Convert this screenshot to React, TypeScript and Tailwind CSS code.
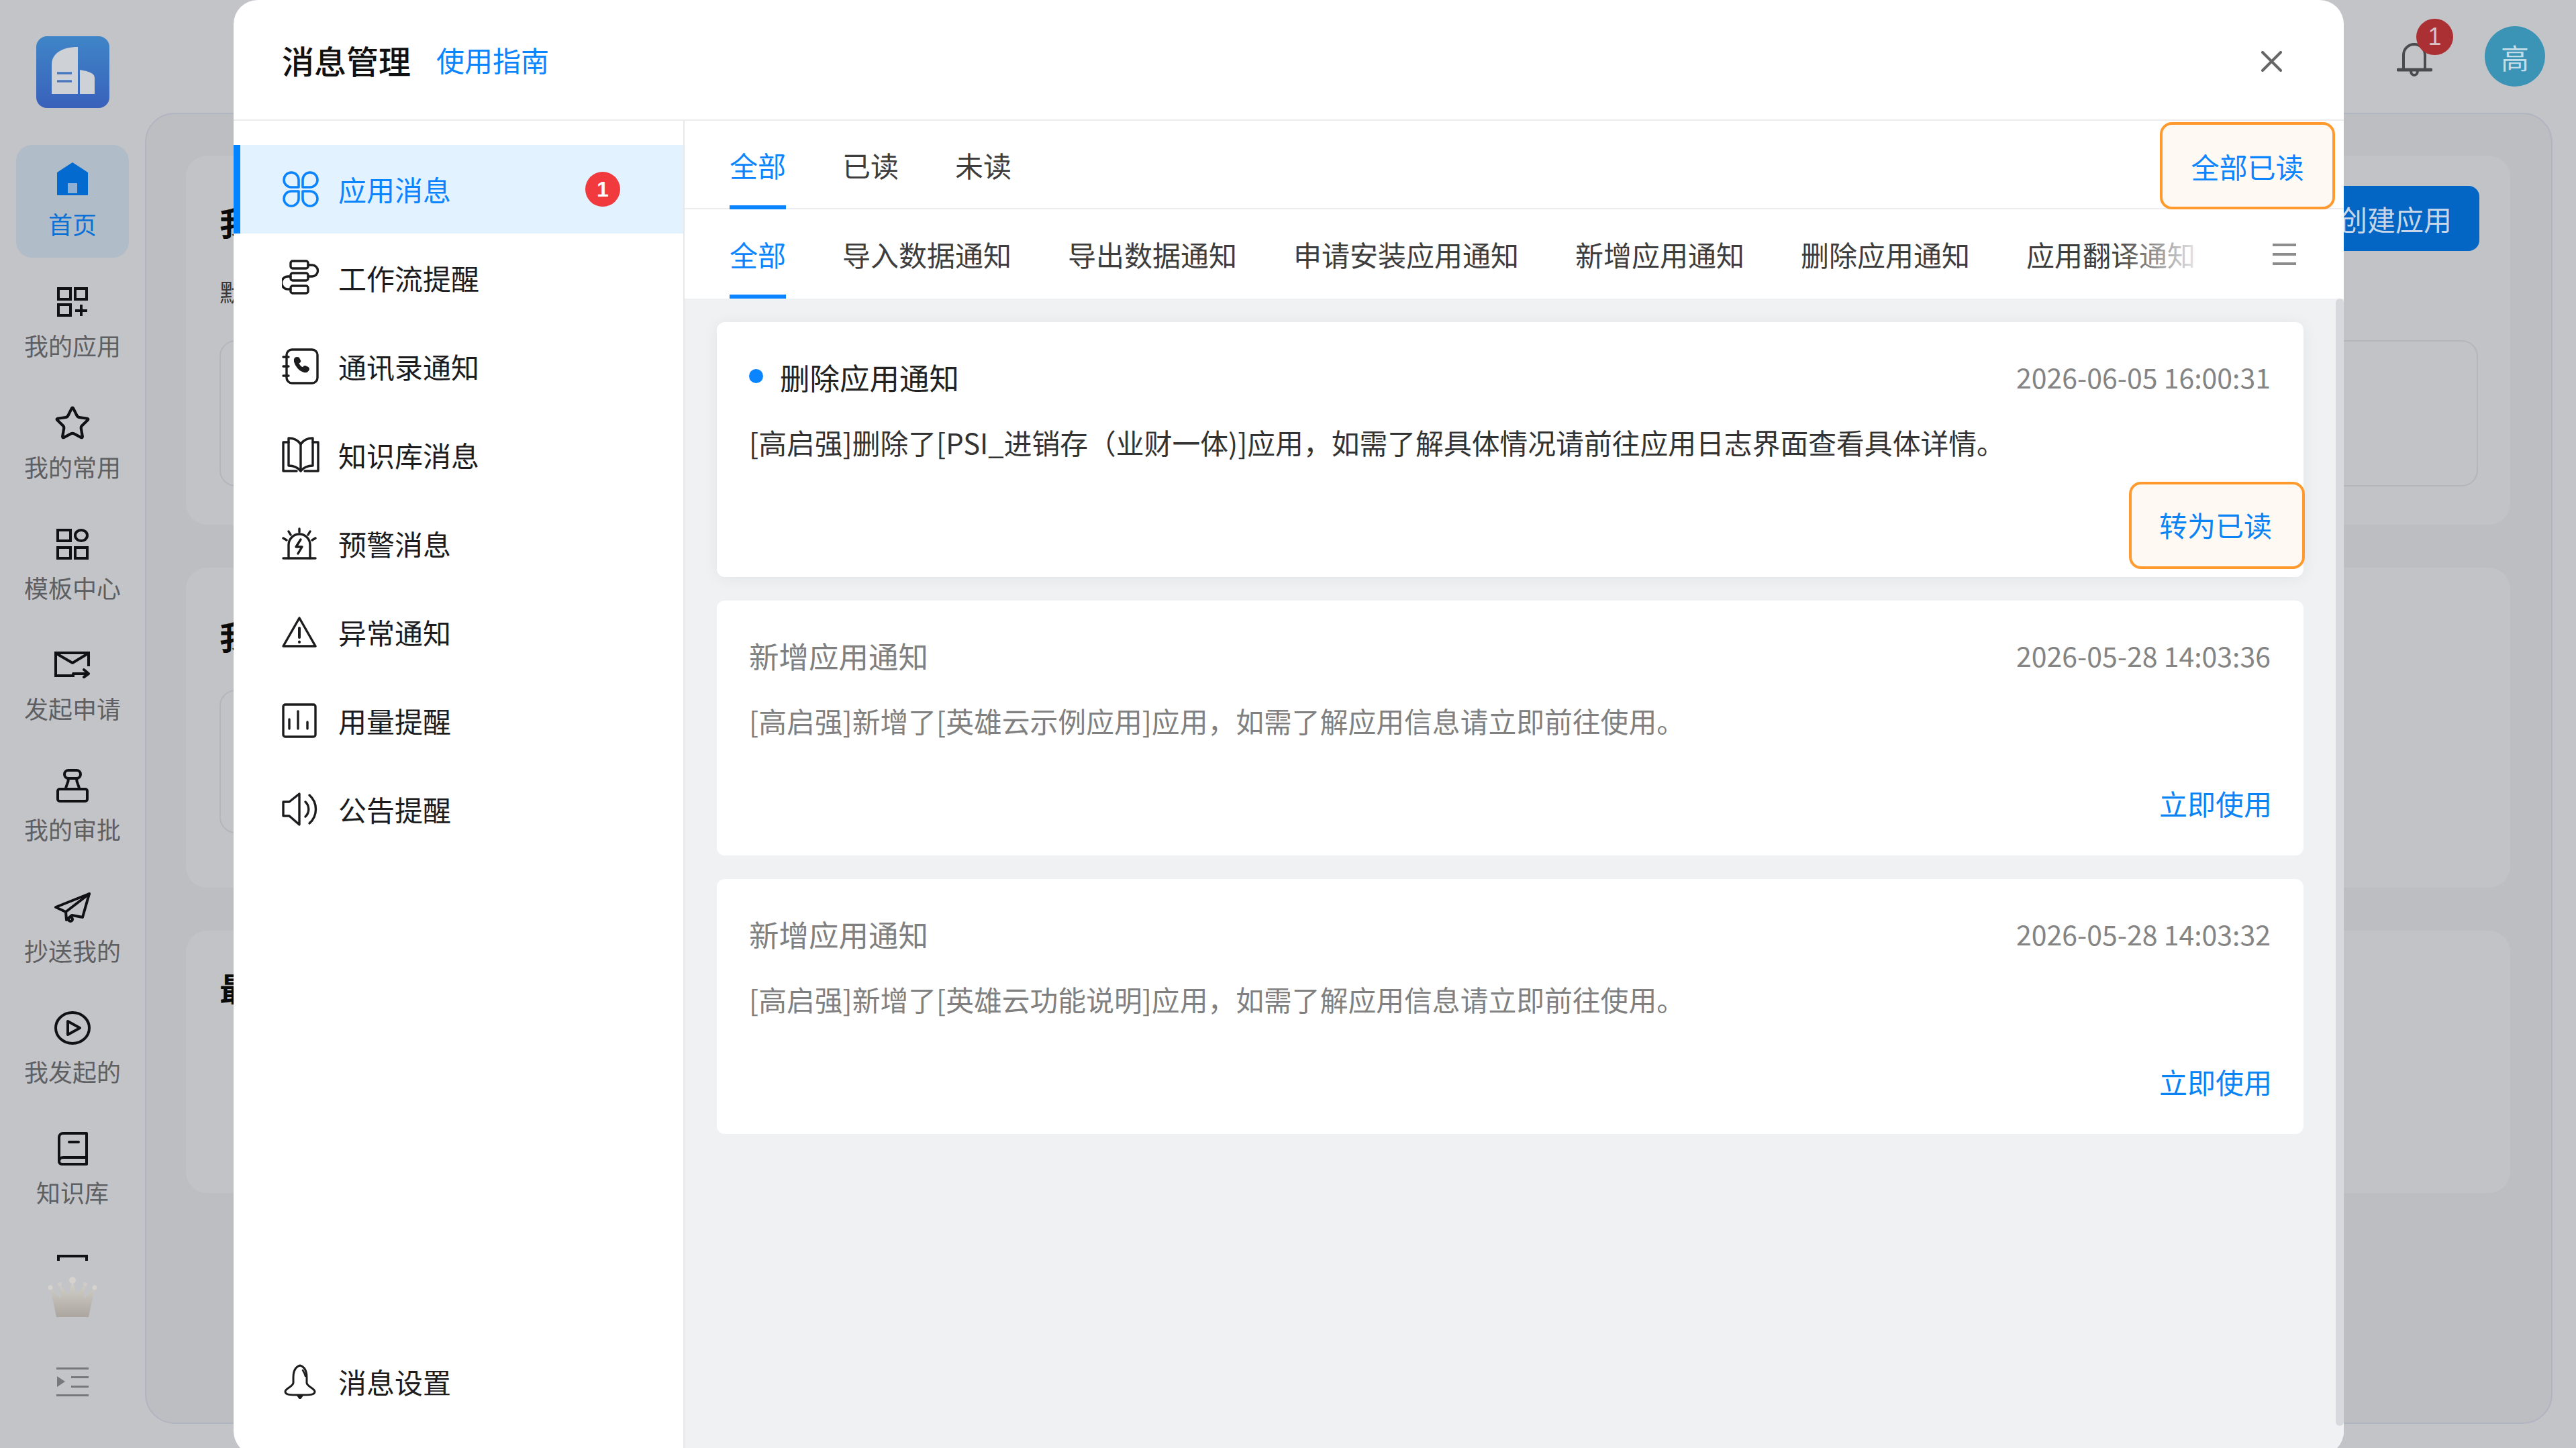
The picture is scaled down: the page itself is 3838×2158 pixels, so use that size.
import React from "react";
import { Star } from "lucide-react";

const FONT = "font-['Noto_Sans_CJK_SC','Noto_Sans',sans-serif]";

const S = (w: number, h: number, children: React.ReactNode, sw = 4) => (
  <svg width={w} height={h} viewBox={`0 0 ${w} ${h}`} fill="none" stroke="currentColor" strokeWidth={sw} strokeLinecap="round" strokeLinejoin="round" className="flex-none">
    {children}
  </svg>
);

const HomeI = () => (
  <svg width="46" height="49" viewBox="0 0 46 49" className="flex-none">
    <path d="M23 0 46 15V49H0V15Z" fill="#036bd0" />
    <rect x="16" y="31" width="14" height="15" fill="#8fb0d2" />
  </svg>
);
const AppsPlus = () =>
  S(46, 44, <>
    <rect x="2" y="2" width="18" height="16" strokeLinejoin="miter" />
    <rect x="27" y="2" width="17" height="16" strokeLinejoin="miter" />
    <rect x="2" y="26" width="18" height="16" strokeLinejoin="miter" />
    <path d="M27 35H45M36 26V43" strokeLinecap="butt" />
  </>);
const StarI = () => <Star size={56} strokeWidth={1.8} className="flex-none" />;
const Template = () =>
  S(48, 46, <>
    <rect x="2" y="2" width="19" height="16" strokeLinejoin="miter" />
    <rect x="2" y="28" width="19" height="16" strokeLinejoin="miter" />
    <rect x="28" y="28" width="18" height="16" strokeLinejoin="miter" />
    <ellipse cx="37" cy="10" rx="9" ry="8" />
  </>);
const MailI = () =>
  S(54, 40, <>
    <path d="M51 22V2H2V36H30" strokeLinejoin="miter" strokeLinecap="butt" />
    <path d="M3 3 27 17 50 3" />
    <path d="M28 33H51M44 27l7 6-7 5" />
  </>);
const StampI = () =>
  S(50, 50, <>
    <rect x="13" y="2" width="24" height="12" rx="6" />
    <path d="M19 14 C19 22 15 24 15 30M31 14C31 22 35 24 35 30" />
    <rect x="3" y="30" width="44" height="18" rx="3" />
  </>);
const PlaneI = () =>
  S(54, 46, <>
    <path d="M2 23 52 3 42 38 26 35 18 42 17 30Z" />
    <path d="M17 30 52 3" />
    <circle cx="24" cy="41" r="3" />
  </>);
const PlayI = () =>
  S(54, 50, <>
    <ellipse cx="27" cy="25" rx="25" ry="23" />
    <path d="M20 15 38 25 20 35Z" />
  </>);
const BookI = () =>
  S(46, 50, <>
    <path d="M44 38H9a6 6 0 0 0-6 6v0a4 4 0 0 0 4 4h37V2H9a6 6 0 0 0-6 6V44" />
    <path d="M18 15H32" />
  </>);
const GridI = () =>
  S(46, 46, <>
    <rect x="2" y="2" width="42" height="42" strokeLinejoin="miter" />
    <path d="M15 11v5M31 11v5" />
  </>);

const Leaf = () =>
  S(56, 56, <>
    <path d="M14 3a11 11 0 0 1 11 11v11H14a11 11 0 0 1 0-22Z" />
    <path d="M42 3a11 11 0 0 1 0 22H31V14A11 11 0 0 1 42 3Z" />
    <path d="M14 31h11v11a11 11 0 1 1-11-11Z" />
    <path d="M31 31h11a11 11 0 1 1-11 11Z" />
  </>, 3.6);
const Flow = () =>
  S(56, 56, <>
    <rect x="13" y="3" width="26" height="11" rx="3" />
    <rect x="13" y="21" width="26" height="11" rx="3" />
    <rect x="13" y="40" width="26" height="11" rx="3" />
    <path d="M39 9h6a8.5 8.5 0 0 1 0 17h-6" />
    <path d="M13 26H9a8.5 8.5 0 0 0 0 19h4" />
  </>, 3.4);
const PhoneBook = () =>
  S(56, 56, <>
    <rect x="7" y="3" width="46" height="50" rx="8" strokeWidth="3.4" />
    <path d="M2 14h8M2 28h8M2 42h8" strokeWidth="3.4" />
    <path d="M22 15c-2 0-4 2-3 6 1.500 6 7 13 14 15 3 1 7-1 7-4 0-1-.5-1.500-1-2l-4-2c-1-.5-2 0-2.500 1l-1 1.500c-3-1-6-4-7-7.500l1.500-1c1-.5 1.500-1.500 1-2.500l-2-4c-.5-.5-1.500-.5-3-.5Z" fill="currentColor" />
  </>, 2);
const OpenBook = () =>
  S(56, 56, <>
    <path d="M28 12C24 6 17 3 10 3V44c7 0 14 3 18 8 4-5 11-8 18-8V3C39 3 32 6 28 12Z" />
    <path d="M28 12V52" />
    <path d="M10 9H2V52H22M46 9h8V52H34" />
  </>, 3.4);
const Siren = () =>
  S(52, 48, <>
    <path d="M2 46H50" />
    <path d="M10 46V26a16 16 0 0 1 32 0V46" />
    <path d="M28 18 21 29h9l-6 10" />
    <path d="M26 2v5M10 6l3 5M42 6l-3 5M2 16l5 3M50 16l-5 3" />
  </>, 3.4);
const Warn = () =>
  S(52, 48, <>
    <path d="M26 3 50 45H2Z" />
    <path d="M26 18V32" strokeWidth="4" />
    <path d="M26 38.500V39" strokeWidth="4" />
  </>, 3.4);
const Usage = () =>
  S(52, 52, <>
    <rect x="2" y="2" width="48" height="48" rx="3" />
    <path d="M11 24V38M24 12V38M38 28V38" />
  </>, 3.4);
const Speaker = () =>
  S(54, 50, <>
    <path d="M26 2 11 14H2V35H11L26 48Z" />
    <path d="M35 14a15 15 0 0 1 0 22" />
    <path d="M41 4a28 28 0 0 1 0 42" />
  </>, 3.4);
const BellOutline = () =>
  S(54, 52, <>
    <path d="M27 2C34 4 37 11 37 20V28C38 34 49 36 49 41C49 46 42 46 27 46S5 46 5 41C5 36 16 34 17 28V20C17 11 20 4 27 2Z" />
    <path d="M31 9C33 12 34 14 35 18" strokeWidth="2.500" />
    <path d="M24 47h6l-3 4Z" fill="currentColor" />
  </>, 3);

const sideItems: { label?: string; icon: React.ReactNode }[] = [
  { label: "我的应用", icon: <AppsPlus /> },
  { label: "我的常用", icon: <StarI /> },
  { label: "模板中心", icon: <Template /> },
  { label: "发起申请", icon: <MailI /> },
  { label: "我的审批", icon: <StampI /> },
  { label: "抄送我的", icon: <PlaneI /> },
  { label: "我发起的", icon: <PlayI /> },
  { label: "知识库", icon: <BookI /> },
  { icon: <GridI /> },
];

const navItems: { label: string; icon: React.ReactNode }[] = [
  { label: "工作流提醒", icon: <Flow /> },
  { label: "通讯录通知", icon: <PhoneBook /> },
  { label: "知识库消息", icon: <OpenBook /> },
  { label: "预警消息", icon: <Siren /> },
  { label: "异常通知", icon: <Warn /> },
  { label: "用量提醒", icon: <Usage /> },
  { label: "公告提醒", icon: <Speaker /> },
];

const subTabs = ["导入数据通知", "导出数据通知", "申请安装应用通知", "新增应用通知", "删除应用通知", "应用翻译通知"];

const cards = [
  {
    unread: true,
    title: "删除应用通知",
    time: "2026-06-05 16:00:31",
    body: "[高启强]删除了[PSI_进销存（业财一体)]应用，如需了解具体情况请前往应用日志界面查看具体详情。",
    action: "转为已读",
  },
  {
    unread: false,
    title: "新增应用通知",
    time: "2026-05-28 14:03:36",
    body: "[高启强]新增了[英雄云示例应用]应用，如需了解应用信息请立即前往使用。",
    action: "立即使用",
  },
  {
    unread: false,
    title: "新增应用通知",
    time: "2026-05-28 14:03:32",
    body: "[高启强]新增了[英雄云功能说明]应用，如需了解应用信息请立即前往使用。",
    action: "立即使用",
  },
];

function Sidebar() {
  return (
    <aside className="w-[216px] flex-none flex flex-col items-center pt-[54px]">
      <div className="w-[109px] h-[107px] rounded-[16px] bg-gradient-to-b from-[#3f85c7] to-[#3961bb] flex-none">
        <svg width="109" height="107" viewBox="0 0 109 107">
          <path d="M23 86V42C23 26 38 16 62 16V86Z" fill="#ced1d5" />
          <path d="M65 50C75 52 87 54 87 62V86H65Z" fill="#ced1d5" />
          <path d="M31 55H53M31 67H53" stroke="#4a79bf" strokeWidth="3.500" />
        </svg>
      </div>
      <nav className="mt-[55px] h-[1663px] w-full overflow-hidden flex-none flex flex-col items-center gap-[12.3px]">
        <div className="w-[168px] h-[168px] flex-none rounded-[24px] bg-[#b0bcc8] flex flex-col items-center pt-[26px] text-[#0b71d6]">
          <div className="h-[49px] flex items-center justify-center"><HomeI /></div>
          <div className="mt-[20px] text-[36px] leading-[44px]">首页</div>
        </div>
        {sideItems.map((it, i) => (
          <div key={i} className="w-[168px] h-[168px] flex-none flex flex-col items-center pt-[30px]">
            <div className="h-[48px] flex items-center justify-center text-[#111114]">{it.icon}</div>
            {it.label && <div className="mt-[18px] text-[36px] leading-[44px] text-[#5e5f62] whitespace-nowrap">{it.label}</div>}
          </div>
        ))}
      </nav>
      <svg width="72" height="62" viewBox="0 0 72 62" className="mt-[24px] flex-none">
        <defs>
          <linearGradient id="crown" x1="0" y1="0" x2="0" y2="1">
            <stop offset="0" stopColor="#d6d3cd" />
            <stop offset="1" stopColor="#aba69f" />
          </linearGradient>
        </defs>
        <path d="M12 60 3 17 19 32 17 12 30 26 36 4 42 26 55 12 53 32 69 17 60 60Z" fill="url(#crown)" />
        <circle cx="3" cy="16" r="3.500" fill="#d6d3cd" />
        <circle cx="69" cy="16" r="3.500" fill="#d6d3cd" />
        <circle cx="17" cy="11" r="3" fill="#cfccc7" />
        <circle cx="55" cy="11" r="3" fill="#cfccc7" />
        <circle cx="36" cy="5" r="5" fill="#d6d3cd" />
      </svg>
      <svg width="48" height="43" viewBox="0 0 48 43" className="mt-[73px] flex-none" fill="#77787c">
        <rect x="0" y="0" width="48" height="3" />
        <rect x="22" y="13" width="26" height="3" />
        <rect x="22" y="27" width="26" height="3" />
        <rect x="0" y="40" width="48" height="3" />
        <path d="M1 13 13 21 1 29Z" />
      </svg>
    </aside>
  );
}

function Background() {
  return (
    <main className="flex-1 min-w-0 flex flex-col pr-[35px]">
      <header className="h-[168px] flex-none flex items-center justify-end pr-[11px]">
        <div className="relative w-[53px] h-[56px] mt-[8px] text-[#4a4b4e]">
          <svg width="53" height="56" viewBox="0 0 53 56" fill="none" stroke="currentColor" strokeWidth="4" strokeLinecap="round">
            <path d="M10 44V22a16 16 0 0 1 32 0V44" />
            <path d="M2 44H51" strokeWidth="5" />
            <path d="M21 46a5 6 0 0 0 10 0" />
          </svg>
          <div className="absolute left-[29px] -top-[32px] w-[55px] h-[54px] rounded-full bg-[#ab3033] flex items-center justify-center text-[36px] leading-none text-[#d9c3c4] font-['Liberation_Sans']">1</div>
        </div>
        <div className="ml-[78px] w-[90px] h-[90px] rounded-full bg-[#3b94b6] flex items-center justify-center text-[42px] text-[#c3dde8]">高</div>
      </header>
      <section className="h-[1954px] flex-none rounded-[44px] border-2 border-[#b0b5c1] bg-[#bdbec2] pl-[59px] pr-[61px] pt-[62px] flex flex-col gap-[64px]">
        <div className="relative h-[550px] flex-none rounded-[32px] bg-[#c2c3c7] pl-[50px] pr-[48px] pt-[70px]">
          <div className="text-[48px] leading-[56px] font-bold text-[#0b0b0c]">我的应用</div>
          <div className="mt-[54px] text-[36px] leading-[44px] text-[#3a3a3c]">默认分组</div>
          <div className="mt-[51px] h-[218px] rounded-[24px] border-2 border-[#b4b6bc]" />
          <div className="absolute right-[46px] top-[45px] w-[300px] h-[97px] rounded-[16px] bg-[#0366c4] flex items-center justify-end pr-[41px] text-[42px] text-[#c6d6e8]">创建应用</div>
        </div>
        <div className="h-[477px] flex-none rounded-[32px] bg-[#c2c3c7] pl-[50px] pr-[48px] pt-[73px]">
          <div className="text-[48px] leading-[56px] font-bold text-[#0b0b0c]">我的常用</div>
          <div className="mt-[53px] h-[214px] w-[600px] rounded-[24px] border-2 border-[#b4b6bc]" />
        </div>
        <div className="h-[391px] flex-none rounded-[32px] bg-[#c2c3c7] pl-[50px] pt-[56px]">
          <div className="text-[48px] leading-[56px] font-bold text-[#0b0b0c]">最近使用</div>
        </div>
      </section>
    </main>
  );
}

function Tab({ label, active, className = "" }: { label: string; active?: boolean; className?: string }) {
  return (
    <div className={`flex-none flex items-center border-b-[6px] pt-[6px] text-[42px] leading-[56px] whitespace-nowrap ${active ? "border-[#0a84ff] text-[#0a84ff]" : "border-transparent text-[#3d3d3d]"} ${className}`}>
      {label}
    </div>
  );
}

function Modal() {
  return (
    <div className="absolute left-[348px] top-0 w-[3144px] h-[2169px] rounded-[36px] bg-white overflow-hidden flex flex-col">
      <div className="h-[180px] flex-none border-b-2 border-[#ececee] flex items-center pl-[72px] pr-[92px]">
        <div className="text-[48px] leading-[60px] font-medium text-[#111]">消息管理</div>
        <div className="ml-[38px] text-[42px] leading-[60px] text-[#0a84ff]">使用指南</div>
        <svg width="31" height="31" viewBox="0 0 31 31" className="ml-auto mt-[4px] text-[#666]" stroke="currentColor" strokeWidth="4" strokeLinecap="round">
          <path d="M2 2 29 29M29 2 2 29" />
        </svg>
      </div>
      <div className="flex-1 min-h-0 flex">
        <div className="w-[672px] flex-none border-r-2 border-[#e8e8ea] pt-[36px] flex flex-col">
          <div className="h-[132px] flex-none flex items-center border-l-[10px] border-[#0084ff] bg-[#e3f2ff] pl-[62px] text-[#0a84ff]">
            <div className="w-[56px] flex-none"><Leaf /></div>
            <span className="ml-[28px] text-[42px] leading-[56px]">应用消息</span>
            <span className="ml-auto mr-[94px] w-[52px] h-[52px] rounded-full bg-[#f03a3e] text-white flex items-center justify-center text-[32px] font-bold leading-none font-['Liberation_Sans']">1</span>
          </div>
          {navItems.map((n) => (
            <div key={n.label} className="h-[132px] flex-none flex items-center pl-[72px] text-[#1c1c1e]">
              <div className="w-[56px] flex-none flex items-center">{n.icon}</div>
              <span className="ml-[28px] text-[42px] leading-[56px]">{n.label}</span>
            </div>
          ))}
          <div className="mt-auto mb-[44px] h-[132px] flex-none flex items-center pl-[72px] text-[#1c1c1e]">
            <div className="w-[56px] flex-none flex items-center"><BellOutline /></div>
            <span className="ml-[28px] text-[42px] leading-[56px]">消息设置</span>
          </div>
        </div>
        <div className="flex-1 min-w-0 flex flex-col">
          <div className="h-[132px] flex-none border-b-2 border-[#ececee] flex pl-[67px] gap-[84px]">
            <Tab label="全部" active className="h-[132px]" />
            <Tab label="已读" className="h-[132px]" />
            <Tab label="未读" className="h-[132px]" />
            <div className="ml-auto mr-[13px] mt-[2px] h-[130px] w-[261px] flex-none rounded-[18px] border-4 border-[#ff9a2e] bg-[#fff9f3] flex items-center justify-center text-[42px] text-[#0a84ff]">全部已读</div>
          </div>
          <div className="relative h-[133px] flex-none flex pl-[67px] gap-[84px] overflow-hidden">
            <Tab label="全部" active className="h-[133px]" />
            {subTabs.map((t) => (
              <Tab key={t} label={t} className="h-[133px]" />
            ))}
            <div className="absolute left-[2130px] top-0 w-[140px] h-[130px] bg-gradient-to-r from-white/0 to-white" />
            <div className="absolute left-[2366px] top-[51px] w-[35px] h-[32px] flex flex-col justify-between">
              <div className="h-[4px] bg-[#8c8c8c]" />
              <div className="h-[4px] bg-[#8c8c8c]" />
              <div className="h-[4px] bg-[#8c8c8c]" />
            </div>
          </div>
          <div className="relative flex-1 min-h-0 bg-[#f0f1f3] pl-[48px] pr-[60px] pt-[35px] flex flex-col gap-[35px]">
            {cards.map((c, i) => (
              <div key={i} className={`h-[380px] flex-none rounded-[12px] bg-white pl-[48px] pr-[49px] pt-[52px] flex flex-col ${c.unread ? "shadow-[0_2px_24px_rgba(0,0,0,0.06)]" : ""}`}>
                <div className="h-[60px] flex-none flex items-center justify-between">
                  <div className={`flex items-center text-[44.5px] leading-[60px] ${c.unread ? "text-[#222]" : "text-[#808080]"}`}>
                    {c.unread && <span className="w-[21px] h-[21px] rounded-full bg-[#0a84ff] mr-[25px] -mt-[4px]" />}
                    {c.title}
                  </div>
                  <div className="-mt-[2px] text-[41px] leading-[60px] text-[#848484]">{c.time}</div>
                </div>
                <div className={`mt-[37px] h-[60px] flex-none text-[41.8px] leading-[60px] whitespace-nowrap ${c.unread ? "text-[#333]" : "text-[#808080]"}`}>{c.body}</div>
                <div className="mt-[29px] h-[130px] flex-none flex justify-end">
                  <div className={`w-[262px] h-[130px] -mr-[51px] pb-[4px] pr-[4px] rounded-[18px] border-4 flex items-center justify-center text-[42px] text-[#0a84f5] ${c.unread ? "border-[#ff9a2e] bg-[#fff9f3]" : "border-transparent"}`}>{c.action}</div>
                </div>
              </div>
            ))}
            <div className="absolute right-0 top-0 w-[12px] h-[1680px] rounded-[6px] bg-[#d8d9dc]" />
          </div>
        </div>
      </div>
    </div>
  );
}

export default function App() {
  return (
    <div className={`relative w-[3838px] h-[2158px] overflow-hidden flex bg-[#c3c4c8] ${FONT}`}>
      <Sidebar />
      <Background />
      <Modal />
    </div>
  );
}
